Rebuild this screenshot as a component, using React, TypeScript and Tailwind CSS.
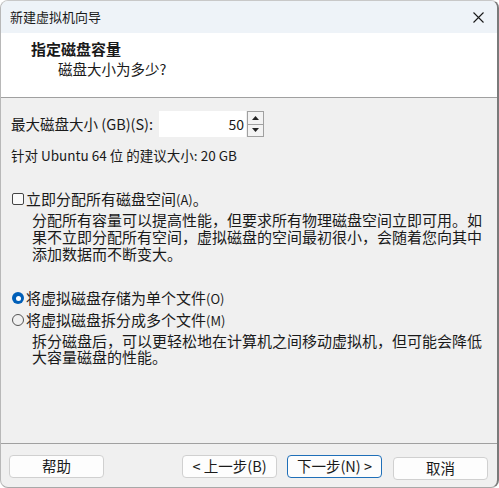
import { useState } from "react";

const cjk = { fontFamily: '"Noto Sans CJK SC", "Noto Sans", sans-serif' };

function Btn({ label, primary }: { label: string; primary?: boolean }) {
  return (
    <button
      className={
        "h-[23px] w-[95px] rounded-[4px] border bg-[#fdfdfd] text-[14.5px] leading-none text-[#1a1a1a] " +
        (primary ? "border-[#1f6fb8]" : "border-[#d0d0d0]")
      }
    >
      {label}
    </button>
  );
}

export default function App() {
  const [size] = useState("50");
  const [split, setSplit] = useState(false);
  const [alloc, setAlloc] = useState(false);

  return (
    <div
      className="flex h-[488px] w-[499px] flex-col overflow-hidden rounded-lg border border-l-[#b8b8b8] border-r-2 border-r-[#7a7a7a] border-t-[#c8c8c8] border-b-[#a8a8a8] bg-[#f0f0f0] text-[#1a1a1a]"
      style={cjk}
    >
      {/* title bar */}
      <div className="flex h-[32px] shrink-0 items-center justify-between bg-[#eef3f8] pl-[9px] pr-[12px]">
        <span className="text-[13px]">新建虚拟机向导</span>
        <svg width="11" height="11" viewBox="0 0 11 11" className="mr-[1px]">
          <path d="M0.5 0.5 L10.5 10.5 M10.5 0.5 L0.5 10.5" stroke="#1a1a1a" strokeWidth="1.1" />
        </svg>
      </div>

      {/* header */}
      <div className="flex h-[64px] shrink-0 flex-col bg-white pl-[30px] pt-[7px]">
        <div className="text-[15px] font-bold leading-[18px]">指定磁盘容量</div>
        <div className="ml-[27px] mt-[2px] text-[14.5px] leading-[18px]">磁盘大小为多少?</div>
      </div>
      <div className="h-px shrink-0 bg-[#a0a0a0]" />

      {/* body */}
      <div className="flex flex-1 flex-col pl-[10px] pr-[10px] pt-[13px]">
        <div className="flex h-[26px] items-center">
          <span className="w-[148px] text-[14.5px]">最大磁盘大小 (GB)(S):</span>
          <div className="flex h-[26px] w-[87px] items-center justify-end bg-white pr-[2px] text-[14px]">
            {size}
          </div>
          <div className="ml-px flex h-[26px] w-[17px] flex-col border border-[#a0a0a0]">
            <div className="flex flex-1 items-center justify-center border-b border-[#a0a0a0] bg-[#f3f3f3]">
              <svg width="7" height="4" viewBox="0 0 7 4">
                <path d="M3.5 0 L7 4 L0 4 Z" fill="#222" />
              </svg>
            </div>
            <div className="flex flex-1 items-center justify-center bg-[#f3f3f3]">
              <svg width="7" height="4" viewBox="0 0 7 4">
                <path d="M0 0 L7 0 L3.5 4 Z" fill="#222" />
              </svg>
            </div>
          </div>
        </div>

        <div className="mt-[10px] text-[13.5px] leading-[16px]">针对 Ubuntu 64 位 的建议大小: 20 GB</div>

        <label className="mt-[27px] flex h-[18px] items-center" onClick={() => setAlloc(!alloc)}>
          <span className="ml-px mr-[2px] h-[12px] w-[12px] rounded-[2px] border border-[#444] bg-[#fafafa]" />
          <span className="text-[15px]">立即分配所有磁盘空间<span className="text-[13px]">(A)</span>。</span>
        </label>
        <p className="ml-[21px] mt-[3px] text-[15px] leading-[17px]">
          分配所有容量可以提高性能，但要求所有物理磁盘空间立即可用。如果不立即分配所有空间，虚拟磁盘的空间最初很小，会随着您向其中添加数据而不断变大。
        </p>

        <div className="mt-[27px] flex h-[18px] items-center" onClick={() => setSplit(false)}>
          <span
            className={
              "ml-px mr-[2px] flex h-[12px] w-[12px] items-center justify-center rounded-full " +
              (!split ? "bg-[#005fb8]" : "border border-[#555]")
            }
          >
            {!split && <span className="h-[5px] w-[5px] rounded-full bg-white" />}
          </span>
          <span className="text-[15px]">将虚拟磁盘存储为单个文件<span className="text-[13px]">(O)</span></span>
        </div>
        <div className="mt-[4px] flex h-[18px] items-center" onClick={() => setSplit(true)}>
          <span
            className={
              "ml-px mr-[2px] flex h-[12px] w-[12px] items-center justify-center rounded-full " +
              (split ? "bg-[#005fb8]" : "border border-[#555]")
            }
          >
            {split && <span className="h-[5px] w-[5px] rounded-full bg-white" />}
          </span>
          <span className="text-[15px]">将虚拟磁盘拆分成多个文件<span className="text-[13px]">(M)</span></span>
        </div>
        <p className="ml-[21px] mt-[4px] text-[15px] leading-[16px]">
          拆分磁盘后，可以更轻松地在计算机之间移动虚拟机，但可能会降低大容量磁盘的性能。
        </p>
      </div>

      {/* footer */}
      <div className="h-px shrink-0 bg-[#a0a0a0]" />
      <div className="flex h-[43px] shrink-0 items-start pl-[8px] pr-[9px] pt-[11px]">
        <Btn label="帮助" />
        <div className="ml-auto flex gap-[10px]">
          <Btn label="< 上一步(B)" />
          <Btn label="下一步(N) >" primary />
          <div className="ml-px">
            <Btn label="取消" />
          </div>
        </div>
      </div>
    </div>
  );
}
